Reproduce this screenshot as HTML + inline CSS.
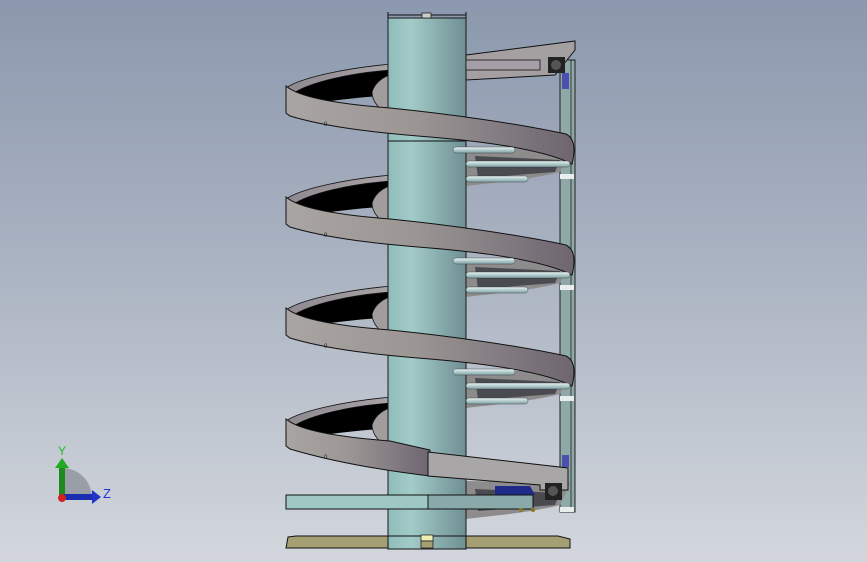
<!DOCTYPE html>
<html><head><meta charset="utf-8"><style>
html,body{margin:0;padding:0;width:867px;height:562px;overflow:hidden}
body{background:linear-gradient(#8b98ad 0%,#a9b2c1 45%,#d3d7dd 100%)}
svg{position:absolute;left:0;top:0}
</style></head><body>
<svg width="867" height="562" viewBox="0 0 867 562" xmlns="http://www.w3.org/2000/svg">
<defs>
<linearGradient id="col" x1="0" x2="1"><stop offset="0" stop-color="#8fbcba"/><stop offset="0.3" stop-color="#a3cbc8"/><stop offset="1" stop-color="#6f8f93"/></linearGradient>
<linearGradient id="band" x1="0" x2="1"><stop offset="0" stop-color="#a9a5a3"/><stop offset="0.45" stop-color="#9b9694"/><stop offset="1" stop-color="#6e6570"/></linearGradient>
<linearGradient id="inner" x1="0" x2="1"><stop offset="0" stop-color="#8e8890"/><stop offset="1" stop-color="#a8a4a6"/></linearGradient>
<linearGradient id="rod" x1="0" x2="0" y1="0" y2="1"><stop offset="0" stop-color="#e8f4f4"/><stop offset="1" stop-color="#7fa3a6"/></linearGradient>
<g id="turn">
  <path d="M286,88 C300,78 345,68 392,64 L392,96 C360,96 330,102 300,104 Z" fill="#000"/>
  <path d="M286,88 C300,78 345,68 392,64 L392,70 C350,73 310,82 292,94 Z" fill="url(#inner)" stroke="#111" stroke-width="0.8"/>
  <path d="M372,92 C375,82 383,77 392,74 L392,118 C380,110 372,102 372,92 Z" fill="#a29d9d" stroke="#111" stroke-width="0.8"/>
  <path d="M466,148 L570,150 L560,172 C530,180 480,184 466,186 Z" fill="#8e8b8c"/>
  <path d="M475,156 L560,160 L555,172 L478,178 Z" fill="#4a4b50"/>
  <rect x="560" y="174" width="14" height="5" fill="#e8eeee"/>
</g>
<g id="front">
  <path d="M286,86 C300,98 340,104 390,108 C450,114 520,124 566,134 Q578,140 572,164 C545,150 490,142 430,137 C380,133 330,128 290,116 L286,113 Z" fill="url(#band)" stroke="#111" stroke-width="1"/>
  <text x="324" y="126" font-size="6" fill="#222" font-family="Liberation Sans">0</text>
  <rect x="453" y="147" width="62" height="6" rx="3" fill="url(#rod)" stroke="#333" stroke-width="0.4"/>
  <rect x="466" y="161" width="104" height="6" rx="3" fill="url(#rod)" stroke="#333" stroke-width="0.4"/>
  <rect x="466" y="176" width="62" height="6" rx="3" fill="url(#rod)" stroke="#333" stroke-width="0.4"/>
</g>
</defs>

<rect x="560" y="60" width="15" height="452" fill="#8fa8a8" stroke="#222" stroke-width="1"/>
<line x1="571" y1="60" x2="571" y2="512" stroke="#222" stroke-width="0.8"/>

<use href="#turn"/>
<use href="#turn" y="111"/>
<use href="#turn" y="222"/>
<use href="#turn" y="333"/>

<rect x="388" y="18" width="78" height="530" fill="url(#col)" stroke="#1a1a1a" stroke-width="1"/>
<line x1="388" y1="15" x2="466" y2="15" stroke="#111" stroke-width="1"/>
<line x1="388" y1="12" x2="388" y2="19" stroke="#111"/><line x1="466" y1="12" x2="466" y2="19" stroke="#111"/>
<rect x="422" y="13" width="9" height="5" fill="#ccc" stroke="#111" stroke-width="0.7"/>
<line x1="388" y1="141" x2="466" y2="141" stroke="#111" stroke-width="1"/>

<path d="M466,55 L575,41 L575,50 L555,75 L466,80 Z" fill="#a4a0a2" stroke="#111" stroke-width="1"/>
<rect x="466" y="60" width="74" height="10" fill="#a59ea6" stroke="#111" stroke-width="0.8"/>
<rect x="548" y="57" width="17" height="16" fill="#222"/><circle cx="556" cy="65" r="5" fill="#555"/>
<rect x="562" y="73" width="7" height="16" fill="#4b4fb0"/>

<use href="#front"/>
<use href="#front" y="111"/>
<use href="#front" y="222"/>
<path d="M286,419 C300,431 340,437 390,441 L430,450 L430,476 C380,470 330,461 290,449 L286,446 Z" fill="url(#band)" stroke="#111" stroke-width="1"/>
<text x="324" y="459" font-size="6" fill="#222" font-family="Liberation Sans">0</text>

<path d="M428,452 L568,468 L568,490 L540,490 L540,485 L428,476 Z" fill="#a8a6a6" stroke="#111" stroke-width="1"/>
<path d="M495,486 L530,486 L535,495 L495,495 Z" fill="#1f2a8a"/>
<rect x="545" y="483" width="17" height="17" fill="#222"/><circle cx="553" cy="491" r="5" fill="#555"/>
<rect x="562" y="455" width="7" height="12" fill="#4b4fb0"/>

<rect x="286" y="495" width="142" height="14" fill="#9fc7c4" stroke="#111" stroke-width="1"/>
<rect x="428" y="495" width="105" height="14" fill="#8aa9ab" stroke="#111" stroke-width="1"/>
<circle cx="521" cy="510" r="2" fill="#887a20"/><circle cx="533" cy="510" r="2" fill="#887a20"/>
<path d="M288,537 L296,536 L558,536 L570,539 L570,548 L286,548 Z" fill="#a59f73" stroke="#111" stroke-width="1"/>
<rect x="388" y="536" width="78" height="13" fill="url(#col)" stroke="#111" stroke-width="1"/>
<rect x="421" y="535" width="12" height="6" fill="#f2eeb0" stroke="#111" stroke-width="0.7"/>
<rect x="421" y="541" width="12" height="7" fill="#a59f73" stroke="#111" stroke-width="0.7"/>

<path d="M62,497 L62,468 A30,30 0 0 1 92,497 Z" fill="#9a9ea6"/>
<rect x="59" y="466" width="6" height="31" fill="#1e8a1e"/>
<path d="M55,468 L62,458 L69,468 Z" fill="#22aa22"/>
<rect x="62" y="494" width="31" height="6" fill="#1a2fb0"/>
<path d="M92,490 L101,497 L92,504 Z" fill="#2233cc"/>
<circle cx="62" cy="498" r="4" fill="#d42020"/>
<text x="58" y="455" font-size="12" fill="#22bb22" font-family="Liberation Sans">Y</text>
<text x="103" y="498" font-size="13" fill="#2233dd" font-family="Liberation Sans">Z</text>
</svg>
</body></html>
